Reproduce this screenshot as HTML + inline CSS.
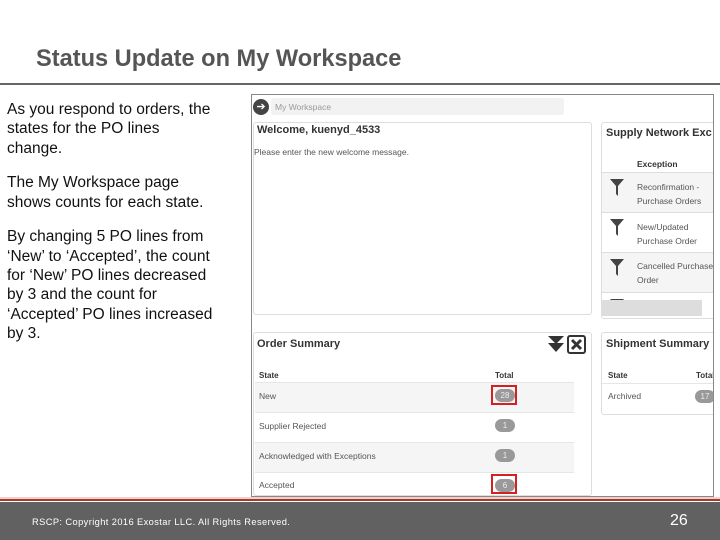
<!DOCTYPE html>
<html><head><style>
*{margin:0;padding:0;box-sizing:border-box}
body{width:720px;height:540px;position:relative;background:#fff;font-family:"Liberation Sans",Arial,sans-serif;overflow:hidden}
.a{position:absolute}
.t{color:#555;font-size:9px}
.badge{position:absolute;width:20px;height:13px;border-radius:7px;background:#999;color:#eee;font-size:8px;text-align:center;line-height:13px}
.red{position:absolute;border:2px solid #d42020;width:26px;height:20px}
.row{position:absolute;left:255px;width:319px;height:30px;border-top:1px solid #e6e6e6}
</style></head><body>
<div class="a" style="left:36px;top:46px;font-size:23.6px;font-weight:bold;color:#555">Status Update on My Workspace</div>
<div class="a" style="left:0;top:83px;width:720px;height:2px;background:#666"></div>
<div class="a" style="left:7px;top:100px;width:240px;font-size:15.5px;line-height:19.3px;color:#111;white-space:nowrap">
<p>As you respond to orders, the<br>states for the PO lines<br>change.</p>
<p style="margin-top:15.5px">The My Workspace page<br>shows counts for each state.</p>
<p style="margin-top:15.5px">By changing 5 PO lines from<br>‘New’ to ‘Accepted’, the count<br>for ‘New’ PO lines decreased<br>by 3 and the count for<br>‘Accepted’ PO lines increased<br>by 3.</p>
</div>
<!-- screenshot -->
<div class="a" style="left:251px;top:94px;width:463px;height:403px;border:1px solid #888;background:#fff;overflow:hidden">
<div class="a" style="left:1px;top:4px;width:16px;height:16px;border-radius:50%;background:#444;color:#fff;font-size:11px;line-height:16px;text-align:center">➔</div>
<div class="a" style="left:19px;top:3px;width:293px;height:17px;background:#f2f2f2;border-radius:3px"></div>
<div class="a t" style="left:23px;top:7px;color:#999;font-size:8.5px">My Workspace</div>
<div class="a" style="left:1px;top:27px;width:339px;height:193px;border:1px solid #ddd;border-radius:3px"></div>
<div class="a" style="left:5px;top:29px;font-size:11px;font-weight:bold;color:#333">Welcome, kuenyd_4533</div>
<div class="a t" style="left:2px;top:52px;font-size:8.5px">Please enter the new welcome message.</div>
<div class="a" style="left:349px;top:27px;width:120px;height:197px;border:1px solid #ddd;border-radius:3px;overflow:hidden">
<div class="a" style="left:4px;top:4px;font-size:11px;font-weight:bold;color:#333;white-space:nowrap">Supply Network Exc</div>
<div class="a" style="left:35px;top:36px;font-size:8.5px;font-weight:bold;color:#333">Exception</div>
<div class="a" style="left:0;top:49px;width:120px;height:40px;background:#f5f5f5;border-top:1px solid #ddd"></div>
<div class="a" style="left:0;top:89px;width:120px;height:40px;border-top:1px solid #ddd"></div>
<div class="a" style="left:0;top:129px;width:120px;height:40px;background:#f5f5f5;border-top:1px solid #ddd"></div>
<div class="a" style="left:0;top:169px;width:120px;height:30px;border-top:1px solid #ddd"></div>
<div class="a t" style="left:35px;top:57px;font-size:8.5px;line-height:14px;white-space:nowrap">Reconfirmation -<br>Purchase Orders</div>
<div class="a t" style="left:35px;top:97px;font-size:8.5px;line-height:14px;white-space:nowrap">New/Updated<br>Purchase Order</div>
<div class="a t" style="left:35px;top:136px;font-size:8.5px;line-height:14px;white-space:nowrap">Cancelled Purchase<br>Order</div>
<svg class="a" style="left:8px;top:56px" width="14" height="140" viewBox="0 0 14 140"><g fill="#444"><path d="M0 0H14L8 7V17L6 15V7Z"/><path d="M0 40H14L8 47V57L6 55V47Z"/><path d="M0 80H14L8 87V97L6 95V87Z"/><path d="M0 120H14L8 127V137L6 135V127Z"/></g></svg>
<div class="a" style="left:0;top:177px;width:100px;height:16px;background:#ddd"></div>
</div>
<div class="a" style="left:1px;top:237px;width:339px;height:164px;border:1px solid #ddd;border-radius:3px"></div>
<div class="a" style="left:5px;top:243px;font-size:11px;font-weight:bold;color:#333">Order Summary</div>
<svg class="a" style="left:295px;top:240px" width="42" height="20"><path d="M1 1H17L9 9Z M1 8H17L9 17Z" fill="#333"/><rect x="21" y="1" width="17" height="17" rx="2" fill="none" stroke="#333" stroke-width="2"/><path d="M25 5L34 14M34 5L25 14" stroke="#333" stroke-width="3"/></svg>
<div class="a" style="left:349px;top:237px;width:120px;height:83px;border:1px solid #ddd;border-radius:3px;overflow:hidden">
<div class="a" style="left:4px;top:5px;font-size:11px;font-weight:bold;color:#333;white-space:nowrap">Shipment Summary</div>
<div class="a" style="left:6px;top:38px;font-size:8px;font-weight:bold;color:#333">State</div>
<div class="a" style="left:94px;top:38px;font-size:8px;font-weight:bold;color:#333">Total</div>
<div class="a" style="left:0;top:50px;width:120px;border-top:1px solid #e6e6e6"></div>
<div class="a t" style="left:6px;top:58px;font-size:8.5px">Archived</div>
<div class="badge" style="left:93px;top:57px">17</div>
</div>
</div>
<div class="a" style="left:259px;top:371px;font-size:8px;font-weight:bold;color:#333">State</div>
<div class="a" style="left:495px;top:371px;font-size:8px;font-weight:bold;color:#333">Total</div>
<div class="row" style="top:382px;background:#f5f5f5"></div>
<div class="row" style="top:412px"></div>
<div class="row" style="top:442px;background:#f5f5f5"></div>
<div class="row" style="top:472px;height:22px"></div>
<div class="a t" style="left:259px;top:391px;font-size:8.5px">New</div>
<div class="a t" style="left:259px;top:421px;font-size:8.5px">Supplier Rejected</div>
<div class="a t" style="left:259px;top:451px;font-size:8.5px">Acknowledged with Exceptions</div>
<div class="a t" style="left:259px;top:480px;font-size:8.5px">Accepted</div>
<div class="badge" style="left:495px;top:389px">28</div>
<div class="badge" style="left:495px;top:419px">1</div>
<div class="badge" style="left:495px;top:449px">1</div>
<div class="badge" style="left:495px;top:479px">6</div>
<div class="red" style="left:491px;top:385px"></div>
<div class="red" style="left:491px;top:474px"></div>
<!-- footer -->
<div class="a" style="left:0;top:497px;width:720px;height:2px;background:#f3d0c8"></div>
<div class="a" style="left:0;top:499px;width:720px;height:2px;background:#a33a2e"></div>
<div class="a" style="left:0;top:502px;width:720px;height:38px;background:#616161"></div>
<div class="a" style="left:32px;top:517px;font-size:9.3px;color:#fff;letter-spacing:0.4px">RSCP: Copyright 2016 Exostar LLC. All Rights Reserved.</div>
<div class="a" style="left:670px;top:512px;font-size:16px;color:#fff">26</div>
</body></html>
